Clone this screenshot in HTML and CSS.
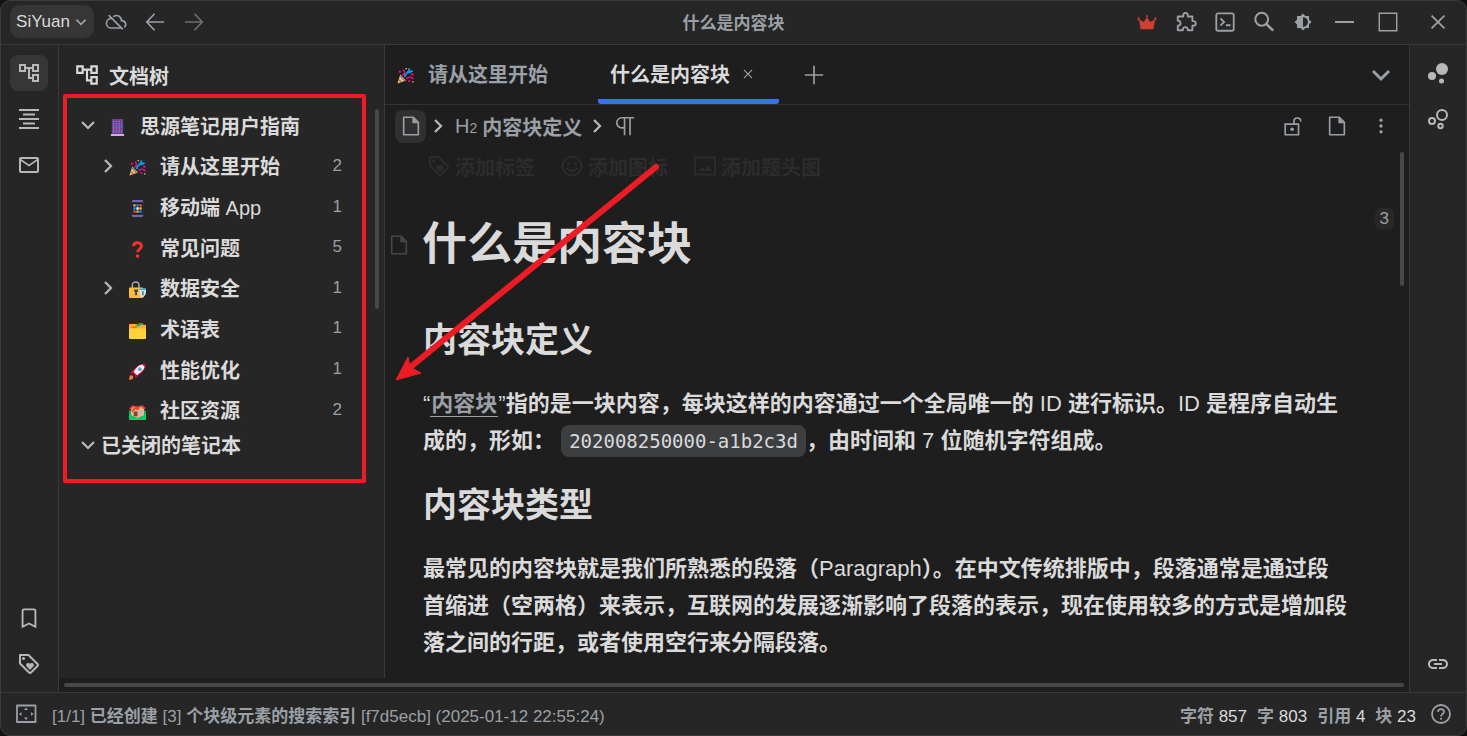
FILE: index.html
```html
<!DOCTYPE html>
<html lang="zh-CN">
<head>
    <meta charset="UTF-8">
    <meta name="viewport" content="width=device-width, initial-scale=1.0">
    <title>什么是内容块</title>
    <link rel="stylesheet" href="styles.css">
</head>
<body>

    <!-- Icon sprite -->
    <svg class="sprite" aria-hidden="true">
        <symbol id="down" viewBox="0 0 24 24"><path d="M4 8l8 8 8-8" fill="none" stroke="currentColor" stroke-width="3"/></symbol>
        <symbol id="right" viewBox="0 0 24 24"><path d="M8 4l8 8-8 8" fill="none" stroke="currentColor" stroke-width="3"/></symbol>
        <symbol id="cloud-off" viewBox="0 0 24 24"><path d="M7 8.2A5 5 0 0 0 6.500 18.500H17.500M9 6.200C14 3 18 6.500 18 10.500C22.500 10.500 24 15.500 21 17.700M4 4.500L19.500 20" fill="none" stroke="currentColor" stroke-width="1.800"/></symbol>
        <symbol id="back" viewBox="0 0 24 24"><path d="M22 12H3M11.500 3L3 12l8.500 9" fill="none" stroke="currentColor" stroke-width="1.800"/></symbol>
        <symbol id="forward" viewBox="0 0 24 24"><path d="M2 12h19M12.500 3L21 12l-8.500 9" fill="none" stroke="currentColor" stroke-width="1.800"/></symbol>
        <symbol id="crown" viewBox="0 0 24 24"><path d="M5 20L3.500 10.500 1.800 9.500V7H4v2.500L8.500 12 11.500 7.500 11 4.500h2l-.5 3L15.500 12 20 9.500V7h2.200v2.500l-1.700 1L19 20z"/></symbol>
        <symbol id="puzzle" viewBox="0 0 24 24"><path d="M4 6h5V5c0-4 5-4 5 0v1h5v5h1c3.500 0 3.500 5 0 5h-1v5h-5c0-4.500-5.500-4.500-5.500 0H3v-5c4 0 4-5.500 0-5.500V6z" fill="none" stroke="currentColor" stroke-width="2" stroke-linejoin="round"/></symbol>
        <symbol id="terminal" viewBox="0 0 24 24"><path d="M4.500 2.500h15a2 2 0 0 1 2 2v15a2 2 0 0 1-2 2h-15a2 2 0 0 1-2-2v-15a2 2 0 0 1 2-2zM7 8l4 4-4 4M13 15.500h5" fill="none" stroke="currentColor" stroke-width="2"/></symbol>
        <symbol id="search" viewBox="0 0 24 24"><circle cx="9.500" cy="9" r="7" fill="none" stroke="currentColor" stroke-width="2.200"/><path d="M14.500 14l7.500 7.500" stroke="currentColor" stroke-width="2.800"/></symbol>
        <symbol id="theme" viewBox="0 0 24 24"><path d="M20 8.690V4h-4.690L12 .69 8.690 4H4v4.690L.69 12 4 15.310V20h4.690L12 23.310 15.310 20H20v-4.690L23.310 12zM12 18.500v-13a6.500 6.500 0 0 1 0 13z"/></symbol>
        <symbol id="min" viewBox="0 0 24 24"><path d="M3 12h19" stroke="currentColor" stroke-width="2"/></symbol>
        <symbol id="max" viewBox="0 0 24 24"><path d="M2.500 2.500h19v19h-19z" fill="none" stroke="currentColor" stroke-width="1.600"/></symbol>
        <symbol id="close" viewBox="0 0 24 24"><path d="M5 5l14 14M19 5L5 19" stroke="currentColor" stroke-width="2"/></symbol>
        <symbol id="plus" viewBox="0 0 24 24"><path d="M12 2v20M2 12h20" stroke="currentColor" stroke-width="1.800"/></symbol>
        <symbol id="tree" viewBox="0 0 24 24"><path d="M22 11V3h-7v3H9V3H2v8h7V8h2v10h4v3h7v-8h-7v3h-2V8h2v3zM7 9H4V5h3zm10 6h3v4h-3zm0-10h3v4h-3z"/></symbol>
        <symbol id="outline" viewBox="0 0 24 24"><path d="M2 2h20v2H2zM6 6.500h12v2H6zM2 11h20v2H2zM6 15.500h12v2H6zM2 20h20v2H2z"/></symbol>
        <symbol id="mail" viewBox="0 0 24 24"><path d="M22 6c0-1.100-.9-2-2-2H4c-1.100 0-2 .9-2 2v12c0 1.100.9 2 2 2h16c1.100 0 2-.9 2-2zm-2 0l-8 5.500L4 6zm0 12H4V8l8 5.500L20 8z"/></symbol>
        <symbol id="bookmark" viewBox="0 0 24 24"><path d="M5 21.500V4a1.500 1.500 0 0 1 1.500-1.500h11A1.500 1.500 0 0 1 19 4v17.500l-7-3.500z" fill="none" stroke="currentColor" stroke-width="2"/></symbol>
        <symbol id="tag" viewBox="0 0 24 24"><path d="M3 3h8.500l9 9c.7.7.7 1.300 0 2l-6.500 6.500c-.7.7-1.300.7-2 0L3 11.500z" fill="none" stroke="currentColor" stroke-width="2" stroke-linejoin="round"/><circle cx="6.500" cy="6.500" r="1.500"/><path d="M13 18l-3.300-3.500c-2-2.500 1.300-5 3.300-2.700 2-2.300 5.300.2 3.300 2.700z"/></symbol>
        <symbol id="graph" viewBox="0 0 24 24"><circle cx="16" cy="8" r="6"/><circle cx="6" cy="15" r="4"/><circle cx="15.500" cy="20" r="2.500"/></symbol>
        <symbol id="graph-global" viewBox="0 0 24 24"><g fill="none" stroke="currentColor" stroke-width="2"><circle cx="16" cy="8" r="5"/><circle cx="6" cy="14" r="3"/><circle cx="14.500" cy="19" r="2.200"/></g></symbol>
        <symbol id="link" viewBox="0 0 24 24"><path d="M3.900 12c0-1.710 1.390-3.100 3.100-3.100h4V7H7c-2.760 0-5 2.240-5 5s2.240 5 5 5h4v-1.900H7c-1.710 0-3.100-1.390-3.100-3.100zM8 13h8v-2H8v2zm9-6h-4v1.900h4c1.710 0 3.100 1.390 3.100 3.100s-1.390 3.100-3.100 3.100h-4V17h4c2.760 0 5-2.240 5-5s-2.240-5-5-5z"/></symbol>
        <symbol id="file" viewBox="0 0 24 24"><path d="M5 2.500h9.500L20 8v13.500H4v-19z" fill="none" stroke="currentColor" stroke-width="1.800" stroke-linejoin="round"/><path d="M13.500 2.500V9H20z"/></symbol>
        <symbol id="unlock" viewBox="0 0 24 24"><path d="M5 10h13v11.500H3.500V10H5M13 10V7c0-5 7.500-5 7.500 0" fill="none" stroke="currentColor" stroke-width="1.800"/><circle cx="11" cy="15.500" r="2"/></symbol>
        <symbol id="more" viewBox="0 0 24 24"><circle cx="12" cy="5" r="2"/><circle cx="12" cy="12" r="2"/><circle cx="12" cy="19" r="2"/></symbol>
        <symbol id="pilcrow" viewBox="0 0 24 24"><path d="M22 3H8.500a5.500 5.500 0 0 0 0 11H11M11.500 3v19M17.500 3v19" fill="none" stroke="currentColor" stroke-width="1.800"/></symbol>
        <symbol id="smile" viewBox="0 0 24 24"><circle cx="12" cy="12" r="9.500" fill="none" stroke="currentColor" stroke-width="1.800"/><circle cx="8.500" cy="9.500" r="1.500"/><circle cx="15.500" cy="9.500" r="1.500"/><path d="M7 14c2 4 8 4 10 0" fill="none" stroke="currentColor" stroke-width="1.800"/></symbol>
        <symbol id="image" viewBox="0 0 24 24"><path d="M2 3.500h20v17H2z" fill="none" stroke="currentColor" stroke-width="1.800" stroke-linejoin="round"/><path d="M6 17l3-4 3 3 4-5 3 6z"/></symbol>
        <symbol id="status" viewBox="0 0 24 24"><path d="M3 3.500h18.500v16.500H3z" fill="none" stroke="currentColor" stroke-width="1.800" stroke-linejoin="round"/><path d="M12 5.500l2 2.500h-4zM12 18l2-2.500h-4zM5 12l2.500-2v4zM19.500 12L17 10v4z"/></symbol>
        <symbol id="help" viewBox="0 0 24 24"><circle cx="12" cy="12" r="9" fill="none" stroke="currentColor" stroke-width="1.800"/><path d="M9 10c0-4 6-3.700 6-.2 0 2.200-3 2.400-3 4.700" fill="none" stroke="currentColor" stroke-width="1.800"/><circle cx="12" cy="16.800" r="1.100"/></symbol>

        <!-- Emoji -->
        <symbol id="guide" viewBox="0 0 18 18"><path fill="#693f94" d="M3 0h12v16H3z"/><path fill="#c9b3dd" d="M2 16h14v2H2z"/><path d="M4 2.500h10M4 6.500h10M4 10.500h10M4 14h10" stroke="#d65aa8" stroke-width="1.300" stroke-dasharray="1.500 1.500"/><path d="M4 4.500h10M4 8.500h10M4 12.500h10" stroke="#5590dc" stroke-width="1.300" stroke-dasharray="2 1"/></symbol>
        <symbol id="party" viewBox="0 0 18 18"><path fill="#ffc83d" d="M.5 17.500l3-9.500 6 6.200z"/><path d="M3.500 9.500l4.500 5M2 13.500L4.500 16" stroke="#8c6ac8" stroke-width="1.500"/><path d="M5.500 8.500c4-1 2.500-4 1-5.500M10 12.500c3-3 5-2 7.500 0" fill="none" stroke="#f70a8d" stroke-width="1.600"/><path d="M8.500 10.500c-1-4 5-4 4.500-9M12 6l4.500-2" fill="none" stroke="#00a6ed" stroke-width="2"/><path fill="#f70a8d" d="M2 4h2v2H2zM15 7h2.500v2H15zM12 14h2v2h-2z"/><path fill="#ffc83d" d="M9 1h1.500v1.500H9zM16 15h1.500v1.500H16z"/></symbol>
        <symbol id="phone" viewBox="0 0 18 18"><rect x="3" y="0" width="12" height="18" rx="1.500" fill="#7468a8"/><path fill="#1d1b30" d="M3 2.500h12v13H3z"/><path fill="#ffb02e" d="M4.500 4.500h2.500V7H4.500zM11 7.800h2.500v2.500H11zM7.800 11h2.500v2.500H7.800z"/><path fill="#00a6ed" d="M7.800 4.500h2.500V7H7.800zM4.500 7.800h2.500v2.500H4.500zM11 11h2.500v2.500H11z"/><path fill="#f8592e" d="M11 4.500h2.500V7H11zM4.500 11h2.500v2.500H4.500z"/><path fill="#fff" d="M7.800 7.800h2.500v2.500H7.800z"/></symbol>
        <symbol id="question" viewBox="0 0 18 18"><path d="M4.800 5.500C5 .5 13.200.8 13.200 5.500c0 3-4.200 3.200-4.200 6.500" fill="none" stroke="#f8312f" stroke-width="3"/><circle cx="9" cy="16" r="1.900" fill="#f8312f"/></symbol>
        <symbol id="lock" viewBox="0 0 18 18"><path d="M3.500 8V4.500c0-4.500 7-4.500 7 0V8" fill="none" stroke="#a8a8a8" stroke-width="1.600"/><rect y="7" width="15" height="11" rx="1" fill="#fcc02e"/><path fill="#433b6b" d="M5.500 9h4v2.500h-1V15h-2v-3.500h-1z"/><path fill="#cfe3f0" d="M11 8h7v4c0 3-2 4.500-3.500 5.500-2-1-3.500-2.500-3.500-5.500z"/><path fill="#2aa5dc" d="M11 8h7v1.500h-7z"/><path fill="#4b6f8a" d="M14 10.500h1.500V15H14z"/></symbol>
        <symbol id="dividers" viewBox="0 0 18 18"><path fill="#00a652" d="M10 1h5v3h-5z"/><path fill="#fbb02c" d="M0 3q0-1 1-1h7l2 1h7q1 0 1 1v5H0z"/><path fill="#00a6ed" d="M7 3h5v1.500H7z"/><path fill="#f8592e" d="M3 5h5v1.500H3z"/><rect y="7" width="18" height="11" rx="1" fill="#ffd43b"/></symbol>
        <symbol id="rocket" viewBox="0 0 18 18"><path fill="#ca0b4a" d="M17.500.5c-7 0-10 4-13 6.500L1 11l4.500.5L7 16l4-3.500C16 9 18 4 17.500.5z"/><path fill="#f4f4f4" d="M14 1.500C9 2.500 7 6 5 9.500L8.500 13C12 10 16 8 16.500 4z"/><circle cx="11.500" cy="6.500" r="2" fill="#69a1d8"/><path fill="#ff822d" d="M0 18l1-5 3.500.5-.5 3.500z"/></symbol>
        <symbol id="houses" viewBox="0 0 18 18"><path fill="#00b26a" d="M0 8h18v10H0z"/><path fill="#f4b183" d="M2 7l2-4 5 2 5-2 2 4v6l-7 3-7-3z"/><path d="M1 6l4-3M7 3l2 4M17 6l-4-3M11 3L9 7M7 5L3 9" fill="none" stroke="#f8412f" stroke-width="2"/><path fill="#7d4533" d="M5 9h4v5H5z"/><path fill="#8dc4ee" d="M11 8h3v3h-3z"/><path fill="#00d26a" d="M0 12l7 4h4l7-4v6H0z"/></symbol>
    </svg>

    <div class="window">

        <!-- Title bar -->
        <header class="toolbar">
            <div class="toolbar-left">
                <button class="workspace">SiYuan <svg class="icon-small"><use href="#down"/></svg></button>
                <button class="tool" aria-label="云端同步"><svg class="icon-tool"><use href="#cloud-off"/></svg></button>
                <button class="tool" aria-label="后退"><svg class="icon-tool"><use href="#back"/></svg></button>
                <button class="tool dim" aria-label="前进"><svg class="icon-tool"><use href="#forward"/></svg></button>
            </div>
            <div class="toolbar-title">什么是内容块</div>
            <div class="toolbar-right">
                <button class="tool vip" aria-label="订阅"><svg class="icon-tool"><use href="#crown"/></svg></button>
                <button class="tool" aria-label="插件"><svg class="icon-tool"><use href="#puzzle"/></svg></button>
                <button class="tool" aria-label="命令面板"><svg class="icon-tool"><use href="#terminal"/></svg></button>
                <button class="tool" aria-label="搜索"><svg class="icon-tool"><use href="#search"/></svg></button>
                <button class="tool" aria-label="外观"><svg class="icon-theme"><use href="#theme"/></svg></button>
                <button class="tool win" aria-label="最小化"><svg class="icon"><use href="#min"/></svg></button>
                <button class="tool win" aria-label="最大化"><svg class="icon-tool"><use href="#max"/></svg></button>
                <button class="tool win-close" aria-label="关闭"><svg class="icon-tool"><use href="#close"/></svg></button>
            </div>
        </header>

        <div class="layout">
            <nav class="dock">
                <button class="dock-item active" aria-label="文档树"><svg class="icon"><use href="#tree"/></svg></button>
                <button class="dock-item" aria-label="大纲"><svg class="icon"><use href="#outline"/></svg></button>
                <button class="dock-item" aria-label="收集箱"><svg class="icon"><use href="#mail"/></svg></button>
                <span class="space"></span>
                <button class="dock-item" aria-label="书签"><svg class="icon-tool"><use href="#bookmark"/></svg></button>
                <button class="dock-item" aria-label="标签"><svg class="icon"><use href="#tag"/></svg></button>
            </nav>

            <div class="center">
                <div class="panels">

                    <!-- File tree -->
                    <aside class="sidebar">
                        <h2 class="sidebar-title"><svg class="icon-title"><use href="#tree"/></svg>文档树</h2>
                        <ul class="tree">
                            <li class="row root"><svg class="arrow"><use href="#down"/></svg><svg class="emoji"><use href="#guide"/></svg><a href="#">思源笔记用户指南</a></li>
                            <li class="row"><svg class="arrow"><use href="#right"/></svg><svg class="emoji"><use href="#party"/></svg><a href="#">请从这里开始</a><span class="count">2</span></li>
                            <li class="row"><span class="arrow"></span><svg class="emoji"><use href="#phone"/></svg><a href="#">移动端 <span class="en">App</span></a><span class="count">1</span></li>
                            <li class="row"><span class="arrow"></span><svg class="emoji"><use href="#question"/></svg><a href="#">常见问题</a><span class="count">5</span></li>
                            <li class="row"><svg class="arrow"><use href="#right"/></svg><svg class="emoji"><use href="#lock"/></svg><a href="#">数据安全</a><span class="count">1</span></li>
                            <li class="row"><span class="arrow"></span><svg class="emoji"><use href="#dividers"/></svg><a href="#">术语表</a><span class="count">1</span></li>
                            <li class="row"><span class="arrow"></span><svg class="emoji"><use href="#rocket"/></svg><a href="#">性能优化</a><span class="count">1</span></li>
                            <li class="row"><span class="arrow"></span><svg class="emoji"><use href="#houses"/></svg><a href="#">社区资源</a><span class="count">2</span></li>
                        </ul>
                        <button class="closed"><svg class="arrow"><use href="#down"/></svg>已关闭的笔记本</button>
                        <span class="thumb thumb-tree"></span>
                        <span class="mark-box"></span>
                    </aside>

                    <!-- Editor -->
                    <main class="editor">
                        <div class="tabs">
                            <button class="tab"><svg class="emoji"><use href="#party"/></svg>请从这里开始</button>
                            <div class="tab current"><span>什么是内容块</span><button class="tab-close" aria-label="关闭页签"><svg class="icon-small"><use href="#close"/></svg></button></div>
                            <button class="tab-new" aria-label="新建"><svg class="icon-tool"><use href="#plus"/></svg></button>
                            <span class="space"></span>
                            <button class="edge" aria-label="切换页签"><svg class="icon"><use href="#down"/></svg></button>
                        </div>

                        <div class="breadcrumb">
                            <button class="crumb-doc" aria-label="文档"><svg class="icon-tool"><use href="#file"/></svg></button>
                            <svg class="arrow light"><use href="#right"/></svg>
                            <a class="crumb" href="#"><span class="en">H<sub>2</sub></span>内容块定义</a>
                            <svg class="arrow light"><use href="#right"/></svg>
                            <a class="crumb" href="#" aria-label="段落"><svg class="icon-tool"><use href="#pilcrow"/></svg></a>
                            <span class="space"></span>
                            <button class="edge" aria-label="锁定编辑"><svg class="icon-tool"><use href="#unlock"/></svg></button>
                            <button class="edge" aria-label="文档菜单"><svg class="icon-tool"><use href="#file"/></svg></button>
                            <button class="edge" aria-label="更多"><svg class="icon-dots"><use href="#more"/></svg></button>
                        </div>

                        <article class="doc">
                            <div class="doc-actions">
                                <button><svg class="icon"><use href="#tag"/></svg>添加标签</button>
                                <button><svg class="icon"><use href="#smile"/></svg>添加图标</button>
                                <button><svg class="icon"><use href="#image"/></svg>添加题头图</button>
                            </div>
                            <div class="doc-title">
                                <svg class="icon-tool"><use href="#file"/></svg>
                                <h1>什么是内容块</h1>
                            </div>
                            <h2>内容块定义</h2>
                            <p><span class="en">“</span><a class="ref" href="#">内容块</a><span class="en">”</span>指的是一块内容，每块这样的内容通过一个全局唯一的 <span class="en">ID</span> 进行标识。<span class="en">ID</span> 是程序自动生<br>成的，形如： <code>202008250000-a1b2c3d</code>，由时间和 <span class="en">7</span> 位随机字符组成。</p>
                            <h2>内容块类型</h2>
                            <p>最常见的内容块就是我们所熟悉的段落（<span class="en">Paragraph</span>）。在中文传统排版中，段落通常是通过段<br>首缩进（空两格）来表示，互联网的发展逐渐影响了段落的表示，现在使用较多的方式是增加段<br>落之间的行距，或者使用空行来分隔段落。</p>
                            <span class="refcount">3</span>
                            <span class="thumb thumb-doc"></span>
                        </article>

                        <svg class="mark-arrow" viewBox="0 0 270 226" aria-hidden="true"><path d="M264 7L16 209" stroke="#ed1c24" stroke-width="6" stroke-linecap="round"/><path d="M4 220L16 197l2 10 11 6z" fill="#ed1c24" stroke="#ed1c24"/></svg>
                    </main>
                </div>
                <div class="hscroll"><span class="hthumb"></span></div>
            </div>

            <nav class="dock dock-right">
                <button class="dock-item" aria-label="关系图"><svg class="icon"><use href="#graph"/></svg></button>
                <button class="dock-item" aria-label="全局关系图"><svg class="icon"><use href="#graph-global"/></svg></button>
                <span class="space"></span>
                <button class="dock-item" aria-label="反向链接"><svg class="icon"><use href="#link"/></svg></button>
            </nav>
        </div>

        <!-- Status bar -->
        <footer class="status">
            <button class="status-icon" aria-label="停靠栏"><svg class="icon"><use href="#status"/></svg></button>
            <div class="message"><span class="en">[1/1]</span> 已经创建 <span class="en">[3]</span> 个块级元素的搜索索引 <span class="en">[f7d5ecb] (2025-01-12 22:55:24)</span></div>
            <div class="counter">
                <span>字符 <b>857</b></span>
                <span>字 <b>803</b></span>
                <span>引用 <b>4</b></span>
                <span>块 <b>23</b></span>
            </div>
            <button class="status-icon" aria-label="帮助"><svg class="icon"><use href="#help"/></svg></button>
        </footer>
    </div>

</body>
</html>
```

FILE: styles.css
```css
* {
    margin: 0;
    padding: 0;
    box-sizing: border-box;
}

body {
    font-family: "Liberation Sans", "Noto Sans CJK SC", sans-serif;
    font-weight: 700;
    font-size: 20px;
    background-color: #0f1013;
    color: #dadada;
    overflow: hidden;
}

button {
    font: inherit;
    color: inherit;
    background: none;
    border: none;
    display: flex;
    align-items: center;
    justify-content: center;
}

a {
    color: inherit;
    text-decoration: none;
}

svg {
    fill: currentColor;
    flex: none;
}

.sprite {
    position: absolute;
    width: 0;
    height: 0;
}

.icon {
    width: 24px;
    height: 24px;
}

.icon-tool {
    width: 22px;
    height: 22px;
}

.icon-title {
    width: 26px;
    height: 26px;
}

.icon-theme {
    width: 18px;
    height: 18px;
}

.icon-small {
    width: 14px;
    height: 14px;
}

.icon-dots {
    width: 20px;
    height: 20px;
}

.en {
    font-weight: 400;
}

.space {
    flex: 1;
}

.window {
    display: flex;
    flex-direction: column;
    height: 100vh;
    border: 1px solid #3c3c3c;
    border-radius: 10px;
    background-color: #262626;
    overflow: hidden;
}

/* Title bar */
.toolbar {
    display: grid;
    grid-template-columns: 1fr auto 1fr;
    align-items: center;
    height: 44px;
    padding-bottom: 2px;
    border-bottom: 1px solid #393939;
    color: #9aa0a6;
    font-size: 17px;
}

.toolbar-left,
.toolbar-right {
    display: flex;
    align-items: center;
}

.toolbar-left {
    padding-left: 9px;
}

.toolbar-right {
    justify-content: flex-end;
}

.workspace {
    width: 84px;
    height: 33px;
    gap: 4px;
    margin-right: 2px;
    border-radius: 10px;
    background-color: #363636;
    color: #dadada;
    font-weight: 400;
}

.workspace svg {
    color: #9aa0a6;
}

.tool {
    width: 39px;
    height: 36px;
}

.dim {
    opacity: 0.6;
}

.vip {
    color: #d23f31;
}

.win {
    width: 44px;
}

.win-close {
    width: 56px;
}

/* Layout */
.layout {
    display: flex;
    flex: 1;
    min-height: 0;
}

.dock {
    display: flex;
    flex-direction: column;
    align-items: center;
    gap: 10px;
    width: 58px;
    padding: 10px 3px 10px 1px;
    border-right: 1px solid #393939;
    color: #b8b8b8;
}

.dock-right {
    width: 57px;
    padding: 10px 0;
    border-right: none;
    border-left: 1px solid #393939;
}

.dock-item {
    width: 38px;
    height: 36px;
    border-radius: 8px;
}

.dock-item.active {
    background-color: #363636;
}

.center {
    display: flex;
    flex: 1;
    flex-direction: column;
    min-width: 0;
    background-color: #1e1e1e;
}

.panels {
    display: flex;
    flex: 1;
    min-height: 0;
}

.hscroll {
    height: 14px;
    padding: 5px;
}

.hthumb {
    display: block;
    height: 4px;
    border-radius: 2px;
    background-color: #474747;
}

.thumb {
    position: absolute;
    width: 4px;
    border-radius: 2px;
    background-color: #474747;
}

/* File tree */
.sidebar {
    position: relative;
    width: 326px;
    border-right: 1px solid #393939;
    background-color: #262626;
}

.sidebar-title {
    display: flex;
    align-items: center;
    gap: 9px;
    height: 60px;
    padding-left: 15px;
    font-size: 20px;
}

.tree {
    display: grid;
    grid-auto-rows: 1fr;
    height: 325px;
    list-style: none;
}

.row {
    display: flex;
    align-items: center;
    padding: 0 42px 0 40px;
}

.row.root {
    padding-left: 20px;
}

.arrow {
    width: 18px;
    height: 18px;
    color: #b8b8b8;
}

.emoji {
    width: 17px;
    height: 17px;
    margin: 4px 14px 0 12px;
}

.count {
    margin-left: auto;
    font-size: 17px;
    font-weight: 400;
    color: #9aa0a6;
}

.closed {
    height: 29px;
    padding-left: 20px;
    gap: 4px;
}

.thumb-tree {
    top: 64px;
    right: 5px;
    height: 200px;
}

.mark-box {
    position: absolute;
    top: 49px;
    left: 4px;
    width: 303px;
    height: 389px;
    border: 4px solid #ed1c24;
    border-radius: 2px;
}

/* Tabs */
.editor {
    position: relative;
    display: flex;
    flex: 1;
    flex-direction: column;
    min-width: 0;
}

.tabs {
    display: flex;
    height: 60px;
    border-bottom: 1px solid #333333;
    color: #9aa0a6;
}

.tab {
    display: flex;
    align-items: center;
    padding: 0 50px 2px 0;
}

.tab.current {
    gap: 4px;
    padding: 0 17px 2px 12px;
    border-bottom: 5px solid #3573f0;
    border-radius: 3px;
    color: #dadada;
}

.tab.current > * {
    margin-top: 5px;
}

.tab-close {
    width: 28px;
    height: 28px;
    color: #9aa0a6;
}

.tab-new {
    width: 70px;
}

.edge {
    width: 44px;
}

.tabs .edge,
.breadcrumb .edge:last-child {
    margin-right: 6px;
}

/* Breadcrumb */
.breadcrumb {
    display: flex;
    align-items: center;
    height: 42px;
    padding-left: 10px;
    color: #9aa0a6;
}

.crumb-doc {
    width: 31px;
    height: 33px;
    border-radius: 8px;
    background-color: #303030;
}

.crumb {
    display: flex;
    align-items: center;
    gap: 5px;
}

.crumb sub {
    font-size: 14px;
    vertical-align: baseline;
}

.arrow.light {
    margin: 0 8px 0 3px;
}

.crumb + .arrow.light {
    margin-left: 6px;
}

/* Document */
.doc {
    position: relative;
    flex: 1;
    min-height: 0;
    padding: 7px 40px 0 38px;
    overflow: hidden;
    font-size: 22px;
}

.doc-actions {
    display: flex;
    gap: 25px;
    padding-left: 4px;
    color: #2b2c2d;
    font-size: 20px;
}

.doc-actions button {
    gap: 4px;
    height: 24px;
}

.doc-title {
    display: flex;
    align-items: center;
    gap: 12px;
    margin: 39px 0 46px -35px;
}

.doc-title svg {
    color: #454648;
}

.doc h1 {
    font-size: 45px;
    line-height: 56px;
}

.doc h2 {
    margin-bottom: 24px;
    font-size: 34px;
    line-height: 42px;
}

.doc p {
    margin-bottom: 24px;
    line-height: 37px;
    white-space: nowrap;
}

.ref {
    padding: 0 1px;
    border-bottom: 1px solid #9aa0a6;
    color: #9aa0a6;
}

.doc code {
    padding: 5px 8px;
    border-radius: 8px;
    background-color: #3c3e40;
    font-family: "DejaVu Sans Mono", monospace;
    font-size: 19px;
    font-weight: 400;
}

.refcount {
    position: absolute;
    top: 61px;
    right: 15px;
    padding: 0 5px;
    border-radius: 6px;
    background-color: #282828;
    color: #9aa0a6;
    font-size: 17px;
    font-weight: 400;
    line-height: 22px;
}

.thumb-doc {
    top: 5px;
    right: 5px;
    height: 134px;
}

.mark-arrow {
    position: absolute;
    top: 115px;
    left: 7px;
    width: 270px;
    height: 226px;
}

/* Status bar */
.status {
    display: flex;
    align-items: center;
    height: 43px;
    padding: 0 13px;
    border-top: 1px solid #393939;
    color: #9aa0a6;
    font-size: 17px;
}

.message {
    flex: 1;
    padding-left: 14px;
}

.counter {
    display: flex;
    gap: 10px;
    padding-right: 13px;
}

.counter b {
    color: #dadada;
    font-weight: 400;
}
```
